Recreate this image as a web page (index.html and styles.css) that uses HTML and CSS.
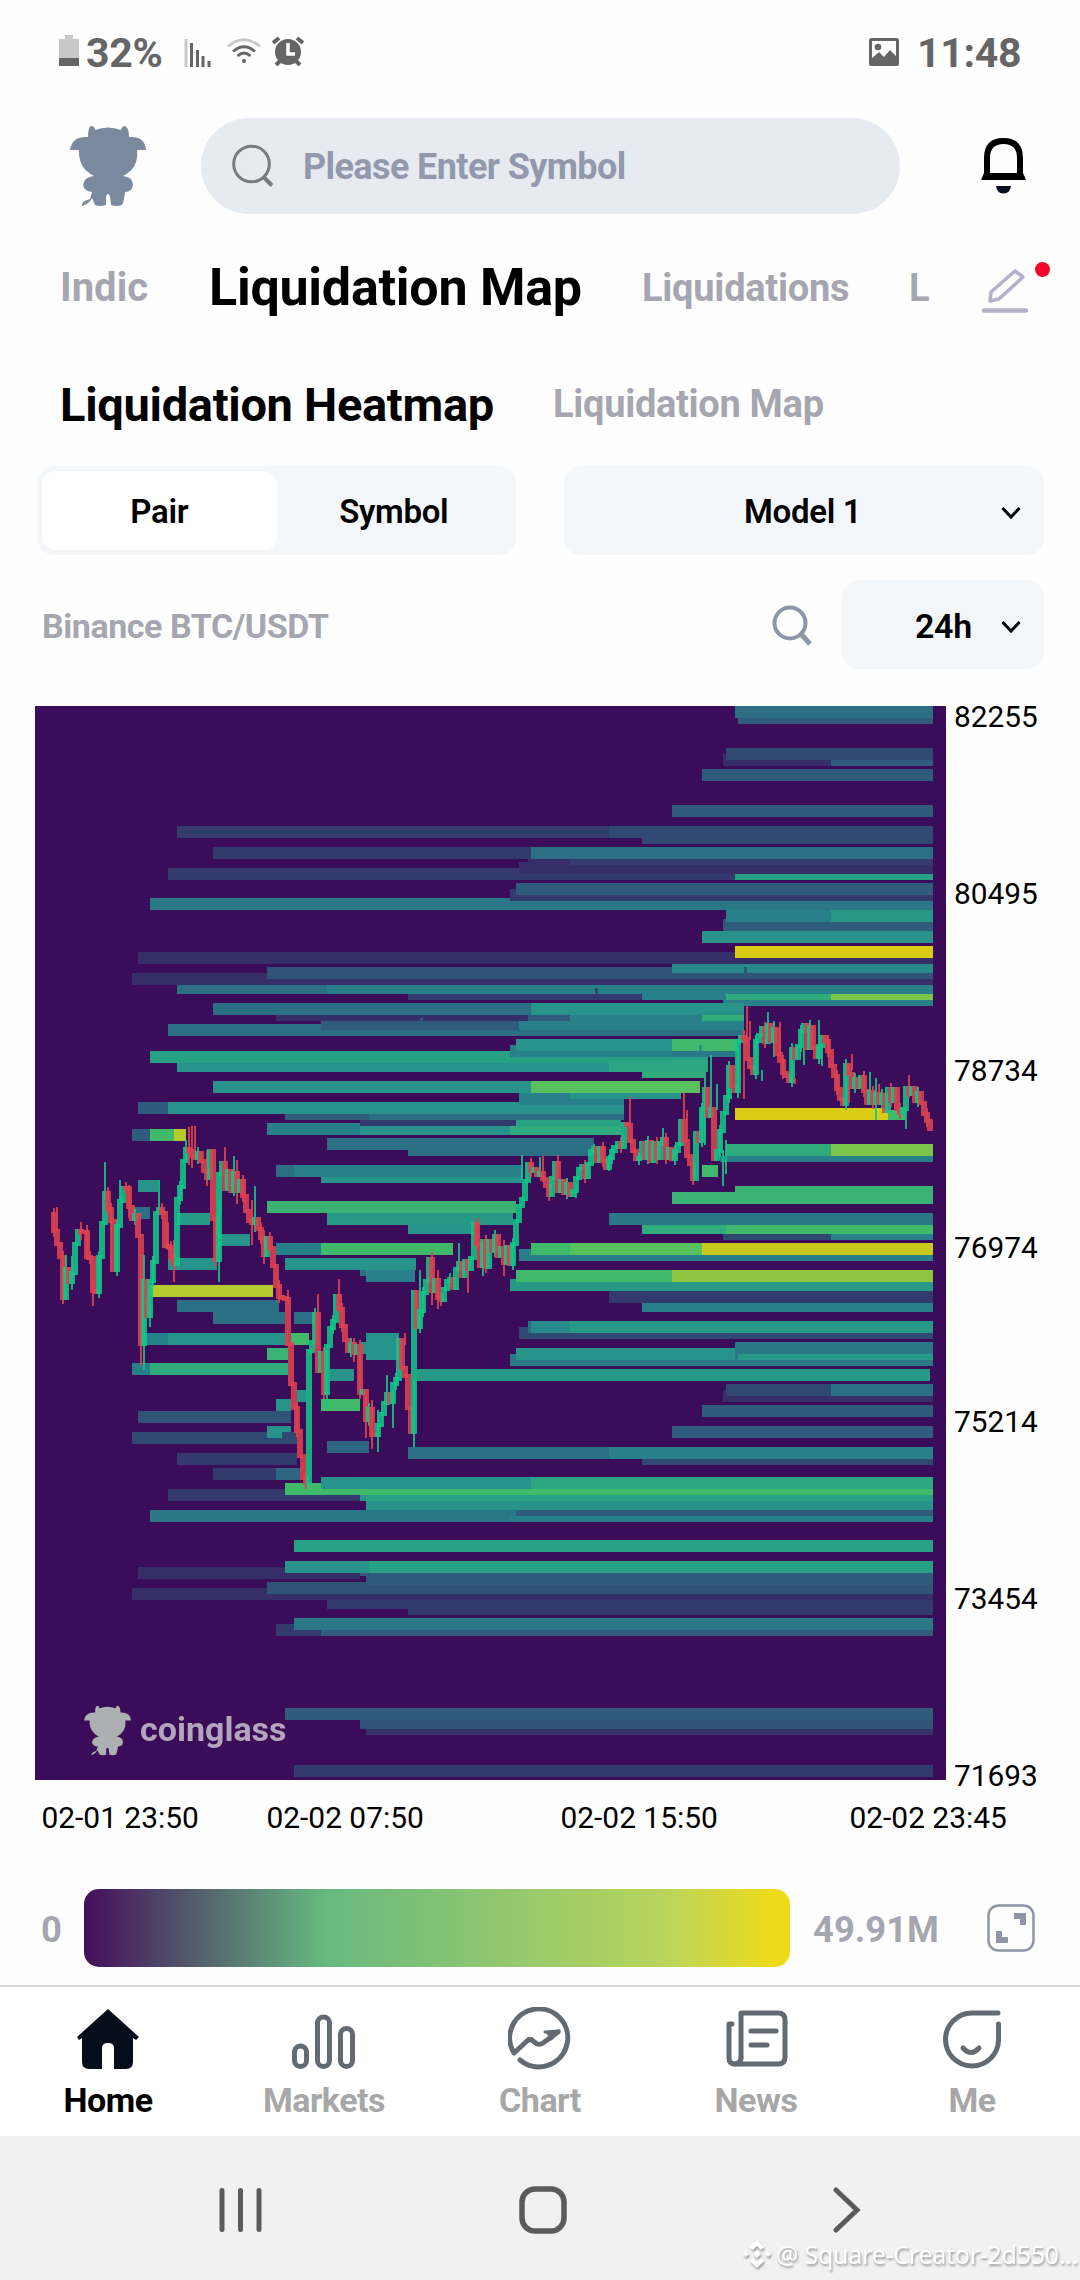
FILE: index.html
```html
<!DOCTYPE html>
<html lang="en">
<head>
    <meta charset="UTF-8">
    <meta name="viewport" content="width=device-width, initial-scale=1.0">
    <title>Liquidation Heatmap</title>
    <link rel="stylesheet" href="styles.css">
</head>
<body>
    <!-- Shared shapes -->
    <svg width="0" height="0" class="defs">
        <symbol id="bull" viewBox="0 0 76 82">
            <path d="M18 12 Q18 2 21 1 Q25 1 25 5 Q38 0 51 5 Q52 1 55 1 Q59 3 59 12 Q75 11 76 25 L67 25 Q69 43 53 51 Q63 52 63 60 Q62 67 55 67 Q54 76 52 80 Q46 82 41 80 L40 71 Q38 67 36 71 L36 80 Q30 82 25 80 L22 73 Q19 79 12 81 Q11 76 20 74 L22 67 Q14 66 13 60 Q14 52 24 51 Q8 43 9 25 L0 25 Q2 11 18 12 Z"/>
        </symbol>
        <symbol id="chevron" viewBox="0 0 22 14">
            <path d="M2.5 2 L11 11 L19.5 2" fill="none" stroke="currentColor" stroke-width="3"/>
        </symbol>
    </svg>

    <div class="status">
        <svg class="battery" width="20" height="32" viewBox="0 0 20 32">
            <path d="M6 0h8v4h6v20H0V4h6z" fill="#c8c8c8"/>
            <path d="M0 23h20v8H0z" fill="#656565"/>
        </svg>
        <span class="percent">32%</span>
        <svg class="signal" width="28" height="30" viewBox="0 0 28 30" stroke="#656565" stroke-width="3">
            <path d="M2 1v28" stroke="#c8c8c8"/>
            <path d="M7.500 5v24M13.500 12v17M19 18v11M25 23v6"/>
        </svg>
        <svg class="wifi" width="34" height="26" viewBox="0 0 34 26" fill="none" stroke="#656565" stroke-width="2.800">
            <path d="M1 8.500 Q17 -5 33 8.500" stroke="#c8c8c8"/>
            <path d="M6 13.500 Q17 4 28 13.500"/>
            <path d="M10.500 18 Q17 12 23.500 18"/>
            <circle cx="17" cy="23" r="2" fill="#656565" stroke="none"/>
        </svg>
        <svg class="alarm" width="32" height="30" viewBox="0 0 32 30">
            <circle cx="16" cy="16" r="13" fill="#656565"/>
            <path d="M1 7l6-5M31 7l-6-5M4 29l5-5M28 29l-5-5" stroke="#656565" stroke-width="4"/>
            <path d="M16 7v11h7" fill="none" stroke="#fff" stroke-width="3.500"/>
        </svg>
        <svg class="picture" width="30" height="28" viewBox="0 0 30 28">
            <rect x="1.500" y="1.500" width="27" height="25" rx="1" fill="none" stroke="#656565" stroke-width="3"/>
            <circle cx="9" cy="9" r="3.300" fill="#656565"/>
            <path d="M2 21l8-7 5 5 6-7 7 7v7H2z" fill="#656565"/>
        </svg>
        <span class="clock">11:48</span>
    </div>

    <header class="header">
        <div class="avatar"><svg width="76" height="82"><use href="#bull"/></svg></div>
        <div class="search">
            <svg width="42" height="44" viewBox="0 0 42 44" fill="none" stroke="#7b7b7b" stroke-width="3">
                <circle cx="19.500" cy="20" r="17.800"/>
                <path d="M32 33.500l8 8" stroke-width="4"/>
            </svg>
            <span>Please Enter Symbol</span>
        </div>
        <svg class="bell" width="45" height="56" viewBox="0 0 45 56">
            <path d="M6 39V20Q6 3 22.500 3T39 20V39z" fill="none" stroke="#000" stroke-width="6"/>
            <path d="M3 35h39l3 7H0z"/>
            <path d="M15 48h15q-1 7.500-7.500 7.500T15 48z" fill="#050f1e"/>
        </svg>
    </header>

    <nav class="tabs">
        <span class="tab indic">Indic</span>
        <span class="tab active">Liquidation Map</span>
        <span class="tab liqs">Liquidations</span>
        <span class="tab last">L</span>
        <div class="edit">
            <svg width="46" height="46" viewBox="0 0 46 46" fill="none" stroke="#b3b1c9" stroke-width="3.500">
                <path d="M33 3L41 9L17 31L8 33L9 24Z" stroke-linejoin="round"/>
                <path d="M2 42.500h42" stroke-width="4.500" stroke-linecap="round"/>
            </svg>
            <i class="dot"></i>
        </div>
    </nav>

    <nav class="subtabs">
        <span class="subtab active">Liquidation Heatmap</span>
        <span class="subtab">Liquidation Map</span>
    </nav>

    <div class="controls">
        <div class="segment">
            <span class="on">Pair</span>
            <span>Symbol</span>
        </div>
        <div class="select model">Model 1<svg width="22" height="14"><use href="#chevron"/></svg></div>
    </div>

    <div class="controls second">
        <span class="pair">Binance BTC/USDT</span>
        <svg class="find" width="40" height="41" viewBox="0 0 40 41" fill="none" stroke="#8d97a9" stroke-width="4">
            <circle cx="18" cy="18" r="15.500"/>
            <path d="M29 29l9 10" stroke-width="5"/>
        </svg>
        <div class="select range">24h<svg width="22" height="14"><use href="#chevron"/></svg></div>
    </div>

    <div class="chart">
        <div class="plot">
            <canvas id="heatmap" width="911" height="1074"></canvas>
            <div class="brand"><svg width="47" height="53"><use href="#bull"/></svg><span>coinglass</span></div>
        </div>
        <ul class="yaxis">
            <li>82255</li>
            <li>80495</li>
            <li>78734</li>
            <li class="tight">76974</li>
            <li>75214</li>
            <li>73454</li>
            <li>71693</li>
        </ul>
    </div>
    <div class="xaxis">
        <span>02-01 23:50</span>
        <span>02-02 07:50</span>
        <span>02-02 15:50</span>
        <span>02-02 23:45</span>
    </div>

    <div class="legend">
        <span class="min">0</span>
        <div class="scale"></div>
        <span class="max">49.91M</span>
        <svg width="48" height="48" viewBox="0 0 48 48">
            <rect x="1.500" y="1.500" width="45" height="45" rx="10" fill="none" stroke="#8f96a5" stroke-width="2.500"/>
            <path d="M27 9h12v12h-6v-6h-6zM9 27h6v6h6v6H9z" fill="#8f96a5"/>
        </svg>
    </div>

    <nav class="bottom">
        <div class="item home">
            <svg width="64" height="64" viewBox="0 0 64 64">
                <path d="M32 2L63 30L60 33L57 31V55Q57 62 50 62H38V41Q38 36 32 36T26 41V62H13Q6 62 6 55V31L3 33L1 30Z" fill="#050d1a"/>
            </svg>
            Home
        </div>
        <div class="item">
            <svg width="64" height="64" viewBox="0 0 64 64" fill="none" stroke="#636a71" stroke-width="5">
                <rect x="2.500" y="39" width="12" height="20.500" rx="6"/>
                <rect x="25.500" y="10" width="12" height="49.500" rx="6"/>
                <rect x="48.500" y="21.500" width="12" height="38" rx="6"/>
            </svg>
            Markets
        </div>
        <div class="item">
            <svg width="64" height="64" viewBox="0 0 64 64" fill="none" stroke="#636a71" stroke-width="5" stroke-linecap="round" stroke-linejoin="round">
                <path d="M12 53A29 29 0 1 0 6 46L19 34Q22 31 25 34L29 37Q32 38 35 36L50 25"/>
                <path d="M37 25L51 24L43 32" fill="#636a71" stroke-width="3"/>
            </svg>
            Chart
        </div>
        <div class="item">
            <svg width="64" height="64" viewBox="0 0 64 64" fill="none" stroke="#636a71" stroke-width="5" stroke-linecap="round" stroke-linejoin="round">
                <path d="M17 51V6H54Q61 6 61 13V50Q61 57 54 57H11Q5 57 5 51V17H8"/>
                <path d="M17 51Q17 56 11 57M27 24H52M27 38H43"/>
            </svg>
            News
        </div>
        <div class="item">
            <svg width="64" height="64" viewBox="0 0 64 64" fill="none" stroke="#636a71" stroke-width="5" stroke-linecap="round">
                <path d="M58 6H32A26.500 26.500 0 1 0 58.500 33V17"/>
                <path d="M23 41Q31 50 39 41"/>
            </svg>
            Me
        </div>
    </nav>

    <footer class="system">
        <svg class="recents" width="44" height="46" viewBox="0 0 44 46" stroke="#5b5b5b" stroke-width="5" stroke-linecap="round"><path d="M3 3.500v39M21.500 3.500v39M40 3.500v39"/></svg>
        <svg class="round" width="48" height="48" viewBox="0 0 48 48"><rect x="3" y="3" width="42" height="42" rx="13" fill="none" stroke="#5b5b5b" stroke-width="5.500"/></svg>
        <svg class="back" width="28" height="46" viewBox="0 0 28 46" fill="none" stroke="#5b5b5b" stroke-width="5" stroke-linecap="round"><path d="M3 3L24 23L3 43"/></svg>
        <div class="mark">
            <svg width="28" height="28" viewBox="0 0 28 28" fill="#fff">
                <path d="M14 0l7 7-3 3-4-4-4 4-3-3zM14 28l7-7-3-3-4 4-4-4-3 3zM3 11l3 3-3 3-3-3zM25 11l3 3-3 3-3-3zM14 10l4 4-4 4-4-4z"/>
            </svg>
            <span>@ Square-Creator-2d550...</span>
        </div>
    </footer>

    <script src="heatmap.js"></script>
</body>
</html>
```

FILE: styles.css
```css
* { box-sizing: border-box; }
body { margin: 0; width: 1080px; height: 2280px; background: #fefefe; font-family: Roboto, "Liberation Sans", sans-serif; color: #000; overflow: hidden; }
svg, canvas { display: block; flex: none; }
span { white-space: nowrap; }
.defs { position: absolute; }

/* Phone status bar */
.status { display: flex; align-items: center; height: 104px; padding: 1px 59px 0 59px; color: #656565; font-size: 41px; font-weight: bold; }
.battery { margin-top: -4px; }
.percent { width: 98px; margin-left: 7px; letter-spacing: -0.3px; }
.wifi { margin-left: 15px; margin-top: -3px; }
.alarm { margin-left: 11px; margin-top: -4px; }
.picture { margin-left: auto; margin-top: -2px; }
.clock { width: 104px; margin-left: 18px; letter-spacing: -0.3px; }

.header { display: flex; align-items: center; height: 124px; padding: 0 54px 0 70px; }
.avatar { display: flex; width: 131px; color: #7b899f; fill: currentColor; }
.search { display: flex; align-items: center; width: 699px; height: 96px; padding-left: 31px; border-radius: 48px; background: #e6ebf2; color: #9299ab; font-size: 36px; font-weight: bold; }
.search span { margin-left: 29px; padding-top: 2px; letter-spacing: -0.6px; }
.bell { margin-left: auto; }

.tabs { display: flex; align-items: center; height: 119px; padding-left: 60px; font-weight: bold; }
.tab { color: #a6a6b0; font-size: 38px; letter-spacing: -0.25px; }
.indic { width: 149px; font-size: 40px; letter-spacing: 0; }
.tab.active { width: 433px; color: #000; font-size: 52px; }
.liqs { width: 267px; }
.last { width: 73px; }
.edit { position: relative; margin-top: 7px; }
.dot { position: absolute; top: -6px; left: 53px; width: 15px; height: 15px; border-radius: 50%; background: #f4042a; }

.subtabs { display: flex; align-items: center; height: 119px; padding: 0 0 5px 60px; font-weight: bold; }
.subtab { color: #a6a6b0; font-size: 38px; letter-spacing: -0.3px; }
.subtab.active { width: 493px; color: #000; font-size: 47px; }

.controls { display: flex; align-items: center; justify-content: space-between; width: 1007px; height: 89px; margin-left: 37px; font-size: 33px; font-weight: 600; letter-spacing: -0.3px; }
.segment { display: flex; width: 479px; height: 89px; padding: 5px; border-radius: 17px; background: #f4f7fa; }
.segment span { flex: 1; line-height: 81px; text-align: center; border-radius: 14px; }
.segment .on { background: #fff; }
.select { display: flex; align-items: center; height: 89px; padding-top: 2px; border-radius: 17px; background: #f4f7fa; }
.select svg { margin-left: auto; margin-right: 22px; margin-top: 2px; }
.model { width: 480px; padding-left: 180px; }
.range { width: 202px; padding-left: 73px; font-size: 34px; }
.second { margin-top: 25px; }
.pair { flex: 1; margin-left: 5px; padding-top: 2px; color: #a6a6b0; font-size: 34px; font-weight: bold; letter-spacing: -0.45px; }
.find { margin-right: 30px; margin-top: 1px; }

/* Chart */
.chart { display: flex; height: 1074px; margin: 37px 0 0 35px; }
.plot { position: relative; width: 911px; }
.brand { position: absolute; left: 49px; top: 998px; display: flex; color: #b3a5bb; fill: #adb0b0; font-size: 34px; font-weight: bold; }
.brand span { margin-left: 9px; line-height: 50px; }
.yaxis { margin: -4px 0 0 8px; padding: 0; list-style: none; font-size: 29.8px; }
.yaxis li { height: 30px; margin-bottom: 147px; line-height: 30px; }
.yaxis .tight { margin-bottom: 144px; }
.xaxis { display: grid; grid-template-columns: 225px 294px 289px 200px; height: 74px; padding-left: 41.5px; font-size: 29.9px; line-height: 75px; }

.legend { display: flex; align-items: center; height: 131px; padding: 17px 45px 0 41px; color: #a6a6b0; font-size: 36.4px; font-weight: bold; }
.min { width: 43px; padding-top: 2px; }
.scale { width: 706px; height: 78px; border-radius: 15px; background: linear-gradient(90deg, #440e5b, #66b980 34%, #b9d45d 82%, #eedb19 98%); }
.max { margin-left: 23px; padding-top: 2px; }
.legend svg { margin-left: auto; }

.bottom { display: flex; height: 151px; border-top: 2px solid #d8d8d8; background: #fff; }
.item { flex: 1; display: flex; flex-direction: column; align-items: center; padding-top: 20px; color: #a7a7a7; font-size: 34px; font-weight: bold; line-height: 40px; letter-spacing: -0.5px; }
.item svg { margin-bottom: 9px; }
.home { color: #000; }

.system { position: relative; height: 144px; padding-top: 50px; display: flex; background: #f1f1f1; }
.recents { margin: 1px 0 0 219px; }
.round { margin-left: 256px; }
.back { margin: 1px 0 0 266px; }
.mark { position: absolute; left: 743px; top: 101px; display: flex; align-items: center; gap: 5px; color: #fff; font: 25px/34px "Noto Sans", sans-serif; letter-spacing: -0.25px; filter: drop-shadow(1px 2px 1px #999); }
```

FILE: heatmap.js
```javascript
const ctx = document.getElementById('heatmap').getContext('2d');

// Screen position of the plot's corner, all data below is in screen units
const LEFT = 35, TOP = 706, END = 933;

// Liquidation intensity, low to high
const colors = ['#3b0c59', '#352e68', '#333a6d', '#304973', '#2f5c7c', '#2c6e83', '#28808a', '#27938a', '#26a184', '#30ab7c', '#41b96a', '#57c15d', '#7ac54a', '#8ec43f', '#b3cb2d', '#c9c920', '#dacb14'];

// [x from, x to, y from, y to, level]
const bands = [
    [735,END,706,718,5],[738,END,718,724,4],[723,831,754,766,1],[831,END,760,766,4],[726,END,748,760,3],[702,END,769,781,4],[672,END,805,817,4],
    [177,609,826,838,2],[609,END,826,838,3],[642,END,838,844,3],[213,531,847,859,2],[531,END,847,859,5],[528,570,859,862,1],[570,END,859,865,2],
    [168,735,868,880,2],[519,570,862,874,1],[570,END,865,874,1],[735,END,874,880,8],[510,END,889,901,2],[516,END,883,895,4],[150,510,898,910,5.5],[510,END,901,910,5.5],
    [723,END,919,931,4],[726,831,910,922,6],[831,END,910,922,7.5],[702,END,931,943,7],[138,735,952,964,1],[735,END,958,964,1],[735,END,946,958,16],
    [132,END,973,985,1],[237,267,967,973,0],[267,END,967,979,3.5],[672,744,964,973,6.5],[747,END,964,973,6.5],[744,747,964,967,6.5],
    [177,327,985,994,5],[327,END,985,994,6],[595,598,988,994,3],[408,642,994,1000,2],[642,726,994,1000,6],[726,831,994,1000,9],[831,END,994,1000,12],[723,END,1000,1006,6],
    [213,531,1003,1015,5],[531,744,1003,1015,7],[276,528,1015,1021,1],[420,423,1018,1021,4],[528,570,1015,1021,4],[570,702,1015,1021,6],[702,744,1015,1021,9],
    [168,744,1024,1036,5],[321,519,1021,1030,4],[519,744,1021,1030,6],[510,672,1045,1057,6],[516,672,1039,1051,7],[672,738,1039,1051,10],[672,735,1051,1057,5.5],[699,702,1045,1051,7],
    [150,510,1051,1063,8],[510,708,1057,1063,8],[177,609,1063,1072,7],[609,708,1060,1072,8.5],[642,706,1072,1078,9],
    [213,531,1081,1093,7],[531,700,1081,1093,11],[519,681,1093,1099,6],[570,681,1093,1099,7],[519,624,1099,1102,6],
    [138,168,1102,1114,4],[168,519,1102,1114,7],[519,624,1102,1108,6],[519,624,1105,1114,7],[285,369,1114,1120,4],[369,624,1114,1120,5],
    [267,360,1123,1135,6],[360,516,1123,1135,7],[360,516,1120,1126,2],[516,621,1120,1126,8],[510,621,1126,1135,9],[327,594,1138,1150,5],[408,594,1150,1156,5],
    [132,150,1129,1141,4],[150,174,1129,1141,10],[174,186,1129,1141,14],[276,294,1165,1177,5],[294,522,1165,1177,6],[321,522,1177,1183,7],
    [138,158,1180,1192,7],[267,516,1201,1213,9.5],[327,513,1213,1225,7.5],[408,474,1225,1234,7],[132,150,1207,1219,5],[177,210,1213,1225,7.5],[219,250,1234,1246,7],
    [276,321,1243,1255,6],[321,453,1243,1255,10],[285,416,1258,1270,7],[360,366,1270,1276,5],[366,415,1270,1282,6],[168,217,1258,1270,7],[150,273,1285,1297,14],
    [177,279,1300,1312,5],[213,285,1312,1324,5],[294,315,1312,1324,5],[142,168,1333,1345,6],[168,288,1333,1345,7],[291,309,1333,1345,10],[267,288,1348,1360,9.5],
    [132,150,1363,1375,6],[150,288,1363,1375,9],[360,399,1342,1354,7],[366,399,1333,1360,7],[330,354,1369,1381,7],[297,306,1390,1402,7],[276,291,1399,1411,7],
    [321,360,1399,1411,10],[138,291,1411,1423,3.5],[132,297,1432,1444,3],[267,291,1426,1432,7],[267,282,1432,1438,7],[327,369,1441,1453,4.5],[177,297,1453,1465,2],[213,276,1468,1480,2],[276,300,1468,1480,4.5],
    [408,609,1447,1459,5],[609,END,1447,1459,6],[642,END,1459,1465,3],[417,930,1369,1381,7.5],
    [735,888,1108,1120,16],[888,905,1110,1120,10],[726,831,1144,1156,9],[831,END,1144,1156,12],[720,END,1156,1162,6],[702,718,1165,1177,10],
    [672,735,1192,1204,9.5],[735,END,1186,1204,9.5],[609,END,1213,1225,5.5],[642,726,1225,1234,9],[726,END,1225,1234,10],[723,831,1234,1240,3],[831,END,1234,1240,6],
    [519,END,1249,1261,6],[531,570,1243,1255,10],[570,702,1243,1255,11],[702,END,1243,1255,15],[510,END,1279,1291,7.5],[516,672,1270,1282,10],[672,END,1270,1282,13],
    [609,END,1291,1303,2],[642,END,1303,1312,6],[519,END,1327,1339,3],[528,531,1321,1333,5],[531,570,1321,1333,6.5],[570,END,1321,1333,7.5],
    [510,END,1354,1366,5.5],[516,735,1348,1360,7],[735,END,1342,1354,5.5],[738,END,1354,1360,7.5],[723,END,1390,1402,1],[726,831,1384,1396,3],[831,END,1384,1396,5],[702,END,1405,1417,4],[672,END,1426,1438,4],
    [321,531,1477,1489,7],[531,END,1477,1489,8.5],[285,321,1483,1495,10],[321,END,1489,1495,10],[168,360,1489,1501,2],[285,END,1489,1495,10],[360,366,1495,1501,7],[366,END,1495,1501,8],[366,END,1501,1510,7],
    [150,516,1510,1522,5.5],[510,END,1516,1522,6],[516,END,1510,1516,4],[294,END,1540,1552,8],[285,369,1561,1573,7],[369,END,1561,1573,8],[138,285,1567,1579,1],[285,360,1573,1579,1],[360,END,1573,1576,4],[366,END,1576,1585,4],
    [132,END,1588,1600,1],[267,366,1582,1594,3.5],[366,END,1585,1594,3.5],[327,END,1600,1609,2],[408,END,1609,1615,2],[276,321,1624,1636,2],[321,END,1630,1636,4],[294,END,1618,1630,5.5],
    [285,END,1708,1720,4],[360,END,1720,1729,3.5],[366,END,1729,1735,1.5],[294,END,1765,1777,2]
];

// Closing level of every 5 minute candle, one per 3px
const closes = [
    1230,1243,1256,1297,1268,1281,1272,1243,1230,1231, 1231,1256,1257,1290,1291,1256,1222,1192,1208,1220,
    1269,1225,1200,1187,1187,1206,1218,1214,1235,1343, 1280,1315,1280,1261,1212,1208,1212,1245,1246,1256,
    1263,1198,1186,1160,1148,1150,1155,1157,1152,1160, 1170,1177,1150,1218,1259,1173,1162,1188,1170,1190,
    1172,1190,1180,1195,1210,1220,1222,1218,1228,1237, 1254,1237,1247,1265,1285,1296,1297,1298,1343,1383,
    1407,1430,1455,1477,1482,1350,1341,1313,1370,1352, 1392,1345,1327,1320,1295,1308,1325,1339,1350,1343,
    1352,1345,1392,1390,1419,1408,1434,1434,1424,1413, 1402,1393,1401,1383,1378,1339,1367,1375,1407,1431,
    1291,1326,1310,1292,1280,1258,1290,1279,1297,1299, 1288,1280,1278,1287,1268,1262,1275,1260,1268,1257,
    1223,1243,1265,1240,1266,1240,1250,1235,1255,1247, 1262,1246,1263,1243,1220,1205,1198,1180,1163,1170,
    1168,1174,1172,1178,1185,1194,1177,1162,1190,1180, 1192,1183,1194,1190,1177,1168,1165,1176,1163,1150,
    1147,1160,1147,1160,1167,1157,1150,1146,1142,1146, 1123,1124,1140,1150,1158,1157,1142,1157,1141,1160,
    1142,1157,1142,1138,1157,1148,1158,1150,1143,1120, 1140,1155,1163,1178,1132,1140,1108,1088,1115,1108,
    1158,1150,1130,1112,1096,1066,1085,1090,1040,1036, 1038,1058,1066,1072,1040,1034,1027,1041,1024,1040,
    1028,1053,1060,1072,1075,1080,1048,1057,1045,1030, 1024,1047,1026,1047,1056,1045,1036,1040,1050,1065,
    1075,1088,1098,1103,1064,1073,1086,1078,1086,1076, 1090,1102,1091,1102,1093,1102,1094,1110,1088,1100,
    1088,1108,1112,1108,1087,1093,1087,1100,1092,1102, 1113,1120,1128
];

// Wicks that stand out from the bodies: candle x -> [high, low]
const wicks = {
    54:[1207,1230],63:[1255,1297],69:[1256,1290],78:[1222,1240],84:[1225,1260],90:[1280,1306],102:[1162,1200],108:[1203,1272],117:[1180,1200],126:[1185,1218],
    138:[1255,1366],141:[1255,1370],147:[1290,1327],156:[1180,1210],165:[1222,1250],171:[1240,1282],183:[1140,1160],186:[1127,1165],189:[1126,1168],192:[1126,1158],
    204:[1150,1186],216:[1200,1282],222:[1147,1188],231:[1156,1196],234:[1160,1204],252:[1186,1232],249:[1200,1245],261:[1230,1264],285:[1290,1305],315:[1294,1345],
    324:[1350,1408],336:[1279,1306],351:[1338,1362],363:[1390,1438],369:[1400,1449],375:[1410,1452],384:[1375,1405],390:[1390,1428],402:[1333,1345],411:[1380,1447],417:[1270,1333],
    429:[1252,1305],435:[1270,1309],456:[1243,1270],465:[1270,1293],480:[1240,1276],501:[1240,1276],519:[1155,1180],537:[1157,1175],540:[1156,1182],555:[1155,1165],573:[1185,1198],
    591:[1144,1155],606:[1155,1171],627:[1097,1124],660:[1128,1144],681:[1093,1120],684:[1110,1140],702:[1078,1145],708:[1055,1118],714:[1084,1110],720:[1150,1186],723:[1140,1174],
    735:[1048,1098],741:[1030,1099],744:[1006,1045],747:[1021,1040],759:[1070,1081],765:[1012,1035],771:[1021,1057],777:[1022,1056],792:[1078,1084],801:[1048,1065],
    807:[1020,1030],816:[1020,1064],819:[1045,1066],846:[1085,1103],849:[1054,1070],867:[1072,1095],873:[1078,1120],876:[1084,1105],903:[1108,1129],906:[1075,1098]
};

function levelColor(level) {
    const a = colors[Math.floor(level)];
    const b = colors[Math.ceil(level)];
    if (a === b) return a;
    const mix = [1, 3, 5].map(i => Math.round((parseInt(a.substr(i, 2), 16) + parseInt(b.substr(i, 2), 16)) / 2));
    return `rgb(${mix.join(',')})`;
}

ctx.fillStyle = colors[0];
ctx.fillRect(0, 0, 911, 1074);
ctx.translate(-LEFT, -TOP);

bands.forEach(([x0, x1, y0, y1, level]) => {
    ctx.fillStyle = levelColor(level);
    ctx.fillRect(x0, y0, x1 - x0, y1 - y0);
});

let open = 1213;
closes.forEach((close, i) => {
    const x = 51 + i * 3;
    const up = close < open;
    const top = Math.min(open, close) - 1;
    const height = Math.abs(close - open) + 4;
    ctx.fillStyle = up ? 'rgba(18, 198, 135, 0.88)' : 'rgba(220, 66, 80, 0.88)';
    ctx.fillRect(x, top, 6, height);

    // small wick on every third candle unless listed above
    const wick = wicks[x] || (i % 3 === 0 ? [top - 4, top + height + 4] : null);
    if (wick) ctx.fillRect(x + 2, wick[0], 2, wick[1] - wick[0]);
    open = close;
});
```
